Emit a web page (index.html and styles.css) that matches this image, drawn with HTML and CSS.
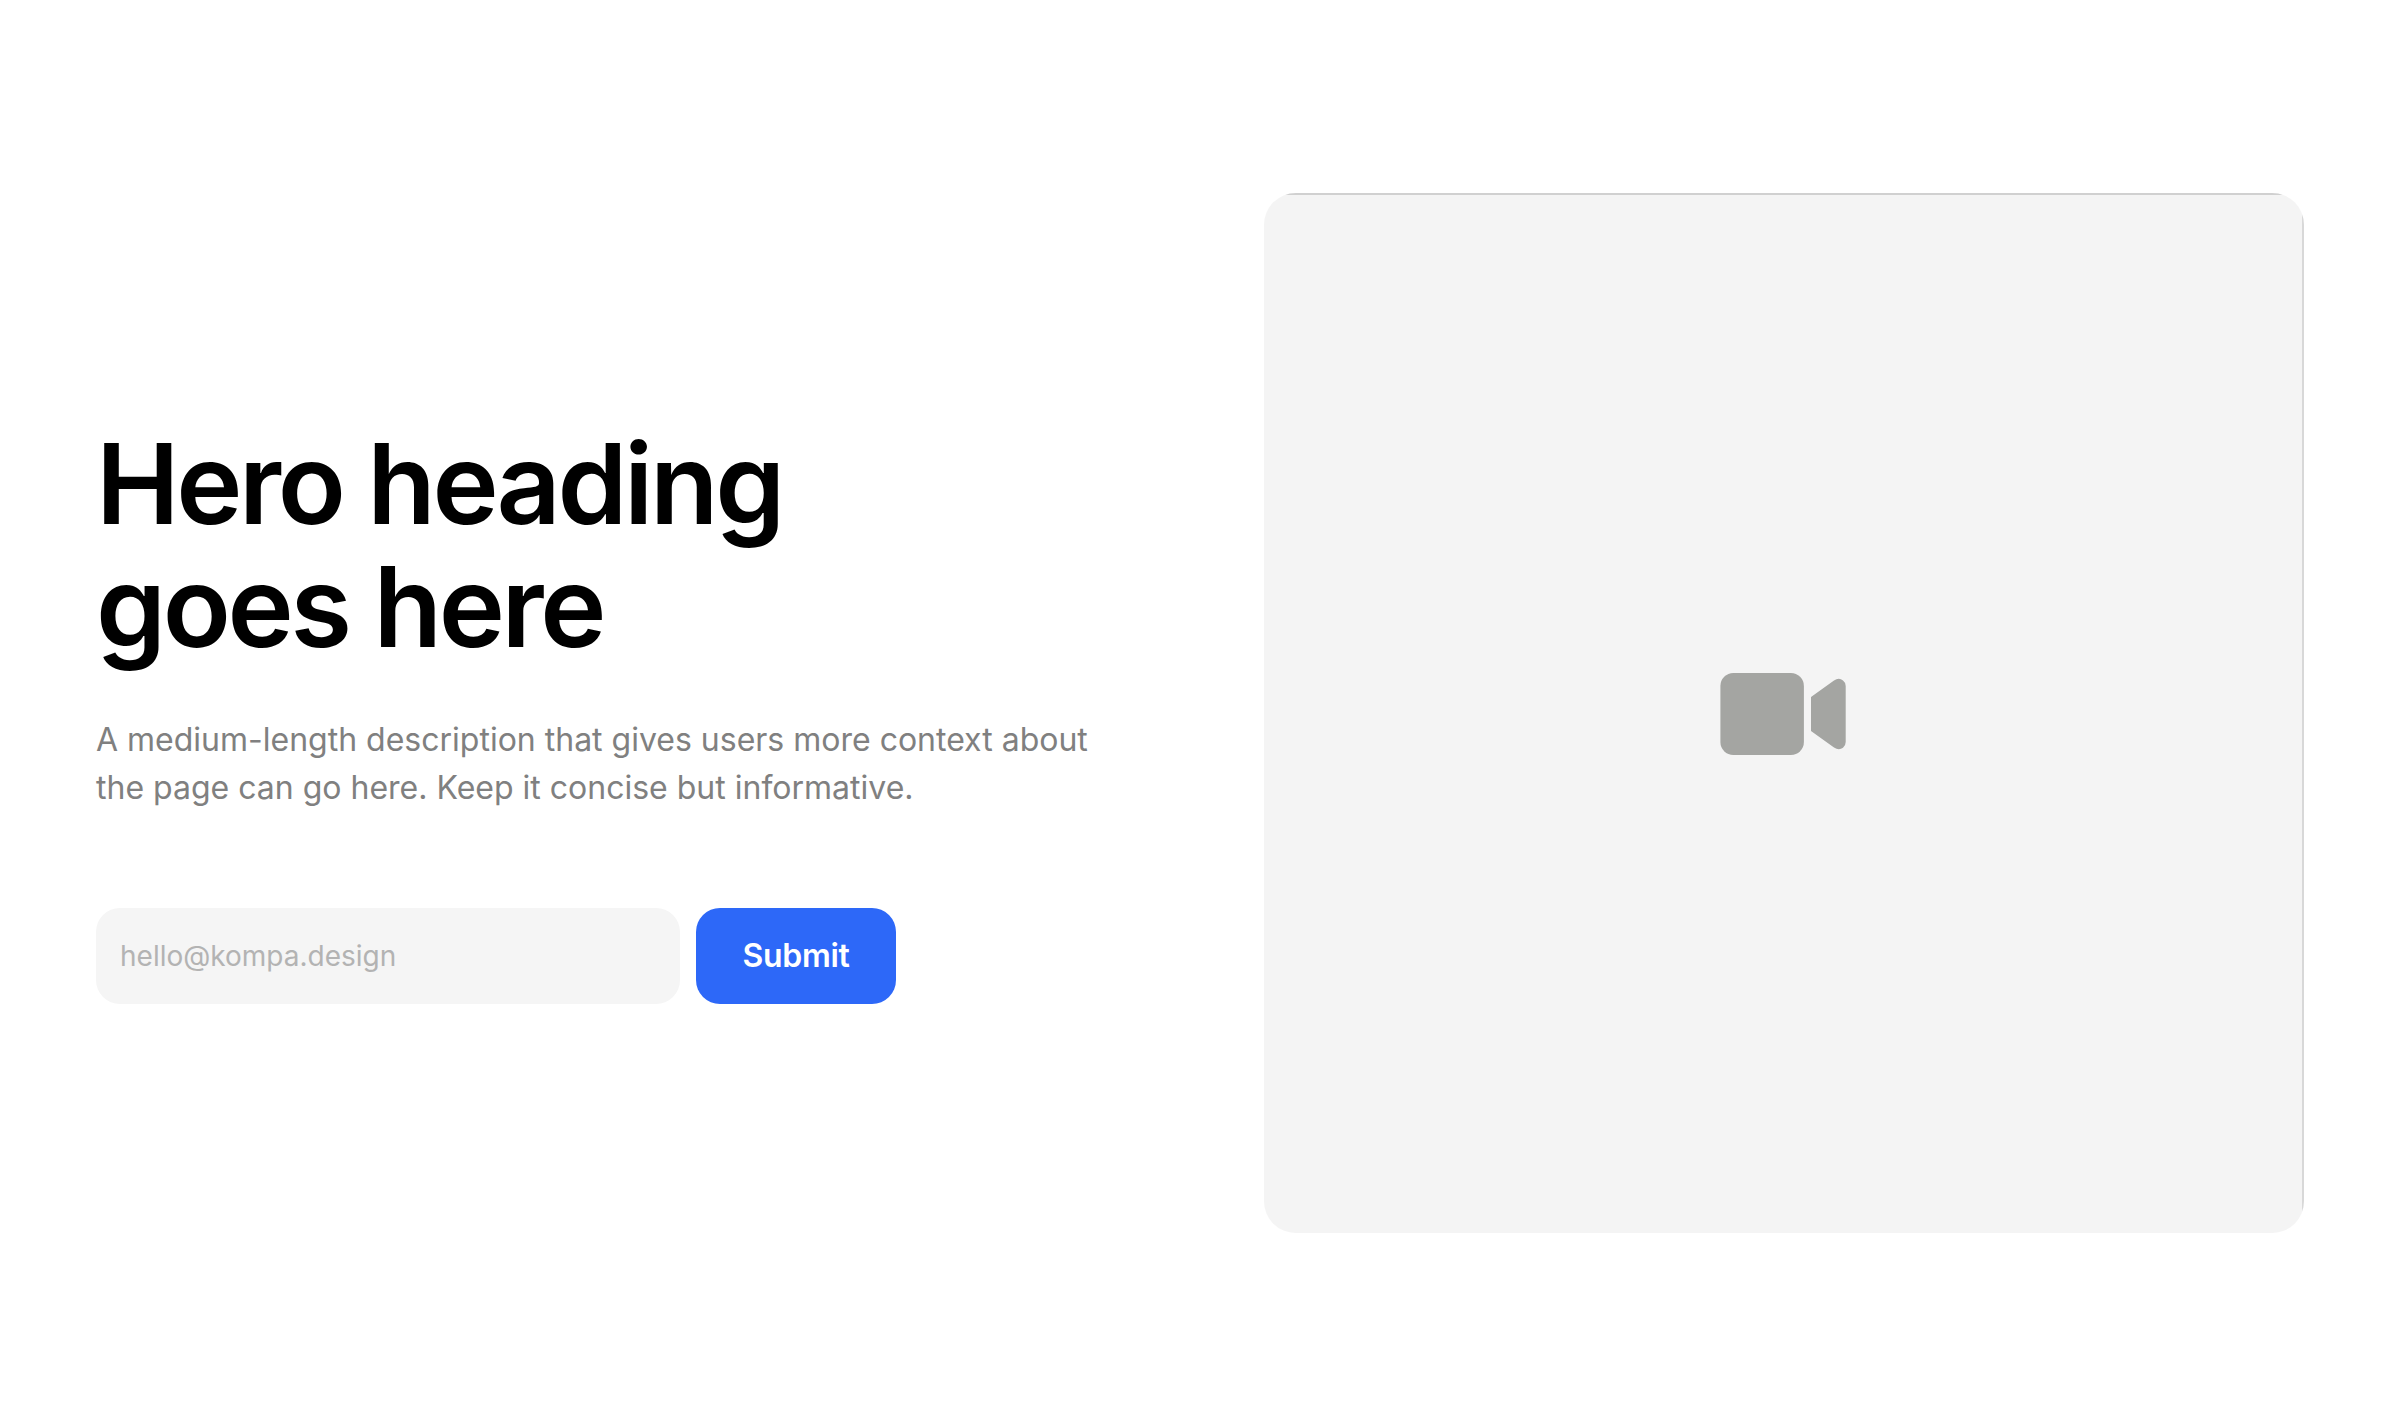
FILE: index.html
```
<!DOCTYPE html>
<html lang="en">
<head>
  <meta charset="UTF-8">
  <meta name="viewport" content="width=device-width, initial-scale=1.0">
  <title>Hero</title>
  <link rel="stylesheet" href="styles.css">
</head>
<body>
  <section class="hero">
    <!-- Hero Text -->
    <div class="hero-content">
      <h1>Hero heading<br>goes here</h1>
      <p>A medium-length description that gives users more context about the page can go here. Keep it concise but informative.</p>
      <form class="signup-form">
        <input type="email" id="email" placeholder="hello@kompa.design" required>
        <button type="submit">Submit</button>
      </form>
    </div>

    <!-- Video Placeholder -->
    <div class="hero-video">
      <svg class="video-icon" viewBox="0 0 128 82">
        <rect x="0.4" width="83.5" height="82" rx="13"/>
        <path d="M91 24 L114 7.4 Q119 4.3 123 7.4 Q125.7 9.4 125.7 13 V69 Q125.7 72.6 123 74.8 Q119 77.7 114 74.6 L91 58 Z"/>
      </svg>
    </div>
  </section>
</body>
</html>
```

FILE: styles.css
```
/* Base Styling */
* {
  margin: 0;
  padding: 0;
  box-sizing: border-box;
}

body {
  font-family: Inter, Arial, sans-serif;
  background-color: #fff;
}

/* Hero Layout */
.hero {
  display: grid;
  grid-template-columns: 1040px 1040px;
  justify-content: space-between;
  align-items: center;
  height: 100vh;
  padding: 2px 96px 0;
}

.hero-content h1 {
  font-size: 112px;
  font-weight: 600;
  line-height: 1.1;
  letter-spacing: -0.03em;
  color: #000;
}

.hero-content p {
  margin-top: 48px;
  font-size: 32px;
  line-height: 48px;
  color: #808080;
}

/* Signup Form */
.signup-form {
  display: flex;
  gap: 16px;
  margin-top: 96px;
}

.signup-form input {
  width: 584px;
  height: 96px;
  padding: 0 24px;
  border: none;
  border-radius: 24px;
  background-color: #f5f5f5;
  font-family: inherit;
  font-size: 28px;
}

.signup-form input::placeholder {
  color: #b3b3b3;
}

.signup-form button {
  width: 200px;
  height: 96px;
  padding-bottom: 2px;
  border: none;
  border-radius: 24px;
  background-color: #2d68f8;
  color: #fff;
  font-family: inherit;
  font-size: 32px;
  font-weight: 600;
  letter-spacing: -0.01em;
  cursor: pointer;
}

/* Video Placeholder */
.hero-video {
  display: flex;
  align-items: center;
  justify-content: center;
  height: 1040px;
  padding-top: 2px;
  border-radius: 32px;
  background-color: #f4f4f4;
  /* thin edge along the top and right, cut off by the rounded corners */
  background-image: linear-gradient(#d0d0d0, #d0d0d0), linear-gradient(#d8d8d8, #d8d8d8);
  background-size: 100% 2px, 2px 100%;
  background-position: top, right;
  background-repeat: no-repeat;
}

.video-icon {
  width: 128px;
  height: 82px;
  fill: #a4a5a2;
}
```
